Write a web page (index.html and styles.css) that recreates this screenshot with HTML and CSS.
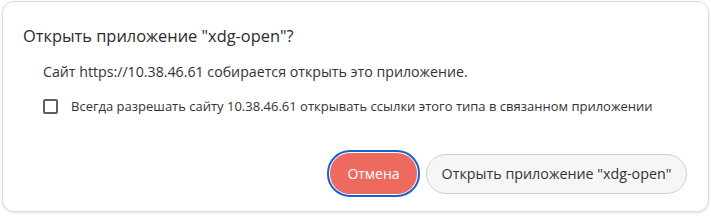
FILE: index.html
```html
<!DOCTYPE html>
<html lang="ru">
<head>
<meta charset="utf-8">
<link rel="stylesheet" href="styles.css">
</head>
<body>
<div class="backdrop">
  <div class="dialog">
    <h1 class="title">Открыть приложение "xdg-open"?</h1>
    <p class="message">Сайт https://10.38.46.61 собирается открыть это приложение.</p>
    <label class="check">
      <span class="box"></span>
      <span class="check-label">Всегда разрешать сайту 10.38.46.61 открывать ссылки этого типа в связанном приложении</span>
    </label>
    <div class="actions">
      <button class="btn btn-cancel">Отмена</button>
      <button class="btn btn-open">Открыть приложение "xdg-open"</button>
    </div>
  </div>
</div>
</body>
</html>
```
FILE: styles.css
```css
html, body {
  margin: 0;
  padding: 0;
  background: #ffffff;
  width: 711px;
  height: 216px;
  overflow: hidden;
}
.backdrop {
  padding: 1px 2px 0 2px;
}
.dialog {
  box-sizing: border-box;
  width: 707px;
  height: 211px;
  background: #fff;
  border: 1px solid #dcdcdc;
  border-radius: 12px;
  box-shadow: 0 1px 3px rgba(0,0,0,0.12);
  padding: 22px 21px 17px 20px;
  display: flex;
  flex-direction: column;
  font-family: "Open Sans", "Noto Sans", sans-serif;
  color: #333;
}
.title {
  margin: 0;
  font-size: 16.4px;
  font-weight: 400;
  line-height: 24px;
  color: #2b2b2b;
}
.message {
  margin: 14px 0 0 20px;
  font-size: 14.2px;
  line-height: 20px;
  color: #333;
}
.check {
  display: flex;
  align-items: center;
  gap: 13px;
  margin: 15px 0 0 20px;
  font-size: 13px;
  line-height: 18px;
  color: #333;
}
.box {
  box-sizing: border-box;
  width: 15px;
  height: 15px;
  border: 2px solid #5f5f5f;
  border-radius: 2px;
  flex: none;
}
.actions {
  margin-top: auto;
  display: flex;
  justify-content: flex-end;
  align-items: center;
  gap: 9px;
}
.btn {
  font-family: "Open Sans", "Noto Sans", sans-serif;
  font-size: 14px;
  height: 40px;
  border-radius: 20px;
  padding: 0 8px;
  white-space: nowrap;
  cursor: pointer;
}
.btn-cancel {
  background: #ee6a5f;
  color: #fff;
  border: none;
  width: 87px;
  height: 41px;
  outline: 2px solid #1a5fd0;
  outline-offset: 1px;
}
.btn-open {
  background: #f6f6f6;
  color: #333;
  border: 1px solid #cfcfcf;
  width: 261px;
  font-size: 14.3px;
}
```
